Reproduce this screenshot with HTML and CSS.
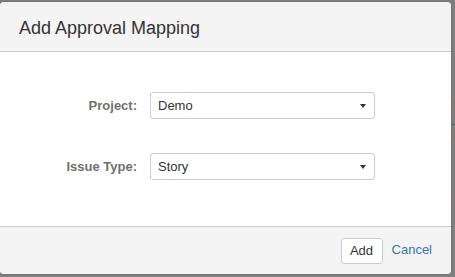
FILE: index.html
```html
<!DOCTYPE html>
<html lang="en">
<head>
  <meta charset="UTF-8">
  <title>Add Approval Mapping</title>
  <link rel="stylesheet" href="styles.css">
</head>
<body>

  <!-- Dialog -->
  <div class="dialog">
    <div class="dialog-header">
      <h2>Add Approval Mapping</h2>
    </div>

    <div class="dialog-body">
      <div class="field-row">
        <label class="field-label">Project:</label>
        <div class="select-box">
          <span>Demo</span>
          <span class="arrow"></span>
        </div>
      </div>
      <div class="field-row">
        <label class="field-label">Issue Type:</label>
        <div class="select-box">
          <span>Story</span>
          <span class="arrow"></span>
        </div>
      </div>
    </div>

    <div class="dialog-footer">
      <button class="btn">Add</button>
      <a class="cancel-link" href="#">Cancel</a>
    </div>
  </div>

  <!-- bits of the page behind the overlay -->
  <div class="backdrop-bits">
    <span class="bit orange" style="top:96px"></span>
    <span class="bit blue" style="top:124px"></span>
    <span class="bit orange" style="top:143px"></span>
    <span class="bit orange" style="top:198px"></span>
  </div>

</body>
</html>
```

FILE: styles.css
```css
/* Page behind the dialog (dimmed) */
body {
  margin: 0;
  padding-top: 2px;
  background: #7f7f7f;
  font-family: Arial, "Liberation Sans", sans-serif;
  color: #333333;
  height: 277px;
  box-sizing: border-box;
  overflow: hidden;
}

.dialog {
  width: 451px;
  height: 272px;
  background: #ffffff;
  border-radius: 4px;
  box-shadow: 0 0 2px rgba(0, 0, 0, 0.35);
  display: flex;
  flex-direction: column;
  overflow: hidden;
}

/* Header */
.dialog-header {
  height: 50px;
  background: #f4f4f4;
  border-bottom: 1px solid #cccccc;
  display: flex;
  align-items: center;
  padding: 3px 0 0 19px;
  box-sizing: border-box;
}

.dialog-header h2 {
  margin: 0;
  font-size: 18px;
  font-weight: normal;
  color: #333333;
}

/* Body */
.dialog-body {
  flex: 1;
  padding-top: 40px;
  display: flex;
  flex-direction: column;
  gap: 34px;
}

.field-row {
  display: grid;
  grid-template-columns: 137px 225px;
  column-gap: 13px;
  align-items: center;
}

.field-label {
  text-align: right;
  font-size: 13px;
  font-weight: bold;
  color: #707070;
}

.select-box {
  height: 27px;
  box-sizing: border-box;
  border: 1px solid #cccccc;
  border-radius: 3px;
  background: #ffffff;
  display: flex;
  align-items: center;
  justify-content: space-between;
  padding: 0 8px 0 7px;
  font-size: 13px;
  color: #333333;
}

.arrow {
  width: 0;
  height: 0;
  border-left: 3px solid transparent;
  border-right: 3px solid transparent;
  border-top: 4px solid #333333;
}

/* Footer */
.dialog-footer {
  height: 47px;
  background: #f4f4f4;
  border-top: 1px solid #cccccc;
  display: flex;
  align-items: center;
  justify-content: flex-end;
  gap: 9px;
  padding-right: 19px;
}

.btn {
  width: 42px;
  height: 26px;
  padding: 0;
  background: #ffffff;
  border: 1px solid #cccccc;
  border-radius: 3px;
  font-family: Arial, "Liberation Sans", sans-serif;
  font-size: 13px;
  color: #333333;
}

.cancel-link {
  font-size: 13px;
  color: #3b73af;
  text-decoration: none;
  margin-bottom: 3px;
}

/* Backdrop page pieces peeking on the right */
.backdrop-bits {
  position: absolute;
  left: 452px;
  top: 0;
  width: 3px;
  height: 277px;
}

.bit {
  position: absolute;
  left: 0;
  width: 3px;
  height: 1px;
}

.orange {
  background: #a08050;
}

.blue {
  background: #40608f;
}
```
